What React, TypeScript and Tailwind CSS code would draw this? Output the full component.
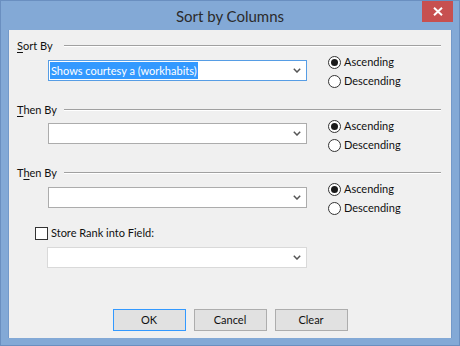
const font = { fontFamily: 'Lato, "Noto Sans", sans-serif' };

const Chevron = () => (
  <svg width="8" height="5" viewBox="0 0 8 5" className="mr-[5px]">
    <path d="M0.8 0.8 L4 4 L7.2 0.8" fill="none" stroke="#555" strokeWidth="1.5" />
  </svg>
);

const Combo = ({ value, focused, className }: { value?: string; focused?: boolean; className: string }) => (
  <div
    className={`flex h-[21px] items-center justify-between bg-white border ${
      focused ? "border-[#569de5]" : "border-[#acacac]"
    } ${className}`}
  >
    {value ? (
      <span className="ml-[1px] h-[17px] bg-[#3399ff] px-[1px] text-white leading-[17px]">{value}</span>
    ) : (
      <span />
    )}
    <Chevron />
  </div>
);

const Radio = ({ checked, label }: { checked?: boolean; label: string }) => (
  <div className="flex h-[19px] items-center">
    <div className="flex h-[13px] w-[13px] items-center justify-center rounded-full border border-[#333] bg-white">
      {checked && <div className="h-[7px] w-[7px] rounded-full bg-[#1a1a1a]" />}
    </div>
    <span className="ml-[3px]">{label}</span>
  </div>
);

const Header = ({ children, className }: { children: React.ReactNode; className: string }) => (
  <div className={`flex h-[14px] items-center pl-[8px] pr-[10px] ${className}`}>
    <span className="w-[47px] shrink-0 leading-[14px]">{children}</span>
    <div className="h-[2px] flex-1 border-t border-[#a0a0a0] border-b border-b-white" />
  </div>
);

const Section = ({ combo, comboTop }: { combo: React.ReactNode; comboTop: string }) => (
  <div className="flex items-start">
    <div className={comboTop}>{combo}</div>
    <div className="ml-[21px] flex flex-col">
      <Radio checked label="Ascending" />
      <Radio label="Descending" />
    </div>
  </div>
);

export default function App() {
  return (
    <div className="h-[346px] w-[460px] overflow-hidden bg-[#83a9d6] border border-[#6a8fc0] text-[11px] text-[#111]" style={font}>
      <div className="relative flex h-[29px] items-center justify-center">
        <span className="mt-[1px] text-[15px] text-[#2b2b2b]">Sort by Columns</span>
        <div className="absolute right-[6px] top-0 flex h-[21px] w-[31px] items-center justify-center bg-[#c75050]">
          <svg width="10" height="9" viewBox="0 0 10 9">
            <path d="M1 0.8 L9 8.2 M9 0.8 L1 8.2" stroke="white" strokeWidth="2" />
          </svg>
        </div>
      </div>
      <div className="mx-[7px] flex h-[308px] flex-col bg-[#f0f0f0] border-l border-r border-[#7399c9]">
        <Header className="mt-[9px]">
          <span className="underline underline-offset-2">S</span>ort By
        </Header>
        <div className="pl-[39px]">
          <Section comboTop="mt-[7px]" combo={<Combo focused value="Shows courtesy a (workhabits)" className="w-[259px]" />} />
        </div>
        <Header className="mt-[12px]">
          <span className="underline underline-offset-2">T</span>hen By
        </Header>
        <div className="pl-[39px]">
          <Section comboTop="mt-[6px]" combo={<Combo className="w-[259px]" />} />
        </div>
        <Header className="mt-[11px]">
          T<span className="underline underline-offset-2">h</span>en By
        </Header>
        <div className="pl-[39px]">
          <Section comboTop="mt-[7px]" combo={<Combo className="w-[259px]" />} />
        </div>
        <div className="ml-[26px] mt-[8px] flex h-[14px] items-center">
          <div className="h-[13px] w-[13px] border border-[#333] bg-white" />
          <span className="ml-[3px]">Store Rank into Field:</span>
        </div>
        <Combo className="ml-[38px] mt-[7px] w-[260px] border-[#d9d9d9]" />
        <div className="mt-[41px] flex justify-center gap-[8px]">
          <button className="h-[22px] w-[73px] border border-[#3399ff] bg-[#e1e1e1]">OK</button>
          <button className="h-[22px] w-[73px] border border-[#adadad] bg-[#e1e1e1]">Cancel</button>
          <button className="h-[22px] w-[73px] border border-[#adadad] bg-[#e1e1e1]">Clear</button>
        </div>
      </div>
    </div>
  );
}
